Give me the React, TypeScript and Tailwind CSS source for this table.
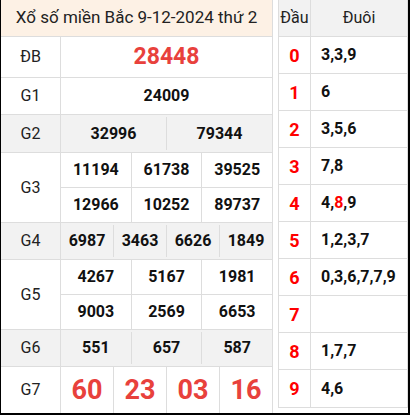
import React from "react";

const B = "border-[#dddddd]";

function Cells({ items, cls = "", short = false }: { items: string[]; cls?: string; short?: boolean }) {
  return (
    <div className={`flex flex-1 ${short ? "py-[2px]" : ""}`}>
      {items.map((n, i) => (
        <div
          key={i}
          className={`flex-1 flex items-center justify-center ${i > 0 ? `border-l ${B}` : ""} ${cls}`}
        >
          {n}
        </div>
      ))}
    </div>
  );
}

function Row({
  label,
  h,
  gray = false,
  last = false,
  children,
}: {
  label: string;
  h: string;
  gray?: boolean;
  last?: boolean;
  children: React.ReactNode;
}) {
  return (
    <div className={`flex ${h} ${last ? "" : `border-b ${B}`} ${gray ? "bg-[#f2f2f2]" : "bg-white"}`}>
      <div className={`w-[60px] shrink-0 border-r ${B} flex items-center justify-center text-[16px] text-[#222]`}>
        {label}
      </div>
      <div className="flex-1 flex flex-col">{children}</div>
    </div>
  );
}

const num = "text-[16px] font-bold text-[#111]";

const loto: [string, React.ReactNode][] = [
  ["0", "3,3,9"],
  ["1", "6"],
  ["2", "3,5,6"],
  ["3", "7,8"],
  ["4", (<>4,<span className="text-[#ff0000]">8</span>,9</>)],
  ["5", "1,2,3,7"],
  ["6", "0,3,6,7,7,9"],
  ["7", ""],
  ["8", "1,7,7"],
  ["9", "4,6"],
];

export default function App() {
  return (
    <div
      className="w-[410px] h-[415px] bg-white border-l border-r-2 border-b-2 border-black flex overflow-hidden"
      style={{ fontFamily: "Roboto, 'Noto Sans', sans-serif" }}
    >
      {/* Left results table */}
      <div className={`w-[272px] shrink-0 border-r ${B} flex flex-col`}>
        <div className={`h-[37px] border-b ${B} bg-[#fdf1e5] flex items-center justify-center text-[17px] text-[#222]`}>
          Xổ số miền Bắc 9-12-2024 thứ 2
        </div>
        <Row label="ĐB" h="h-[41px]">
          <Cells items={["28448"]} cls="text-[23px] font-bold text-[#e8413c]" />
        </Row>
        <Row label="G1" h="h-[37px]">
          <Cells items={["24009"]} cls={num} />
        </Row>
        <Row label="G2" h="h-[38px]" gray>
          <Cells items={["32996", "79344"]} cls={num} short />
        </Row>
        <Row label="G3" h="h-[70px]">
          <div className={`flex flex-1 border-b ${B}`}>
            <Cells items={["11194", "61738", "39525"]} cls={num} />
          </div>
          <div className="flex flex-1">
            <Cells items={["12966", "10252", "89737"]} cls={num} />
          </div>
        </Row>
        <Row label="G4" h="h-[37px]" gray>
          <Cells items={["6987", "3463", "6626", "1849"]} cls={num} short />
        </Row>
        <Row label="G5" h="h-[70px]">
          <div className={`flex flex-1 border-b ${B}`}>
            <Cells items={["4267", "5167", "1981"]} cls={num} />
          </div>
          <div className="flex flex-1">
            <Cells items={["9003", "2569", "6653"]} cls={num} />
          </div>
        </Row>
        <Row label="G6" h="h-[37px]" gray>
          <Cells items={["551", "657", "587"]} cls={num} short />
        </Row>
        <Row label="G7" h="flex-1" last>
          <Cells items={["60", "23", "03", "16"]} cls="text-[27px] font-bold text-[#e8413c]" />
        </Row>
      </div>

      <div className="w-[5px] shrink-0" />

      {/* Right loto table */}
      <div className="w-[130px] shrink-0 flex flex-col">
        <div className={`border-l border-r border-b ${B} flex flex-col`}>
          <div className={`h-[37px] flex bg-[#f2f2f2] border-b ${B} text-[16px] text-[#222]`}>
            <div className={`w-[32px] shrink-0 border-r ${B} flex items-center justify-center`}>Đầu</div>
            <div className="flex-1 flex items-center justify-center">Đuôi</div>
          </div>
          {loto.map(([d, t], i) => (
            <div key={d} className={`h-[37px] flex ${i < 9 ? `border-b ${B}` : ""}`}>
              <div
                className={`w-[32px] shrink-0 border-r ${B} flex items-center justify-center text-[18px] font-bold text-[#ff0000]`}
              >
                {d}
              </div>
              <div className="flex-1 flex items-center pl-[10px] text-[16px] font-bold text-[#111]">{t}</div>
            </div>
          ))}
        </div>
      </div>
    </div>
  );
}
